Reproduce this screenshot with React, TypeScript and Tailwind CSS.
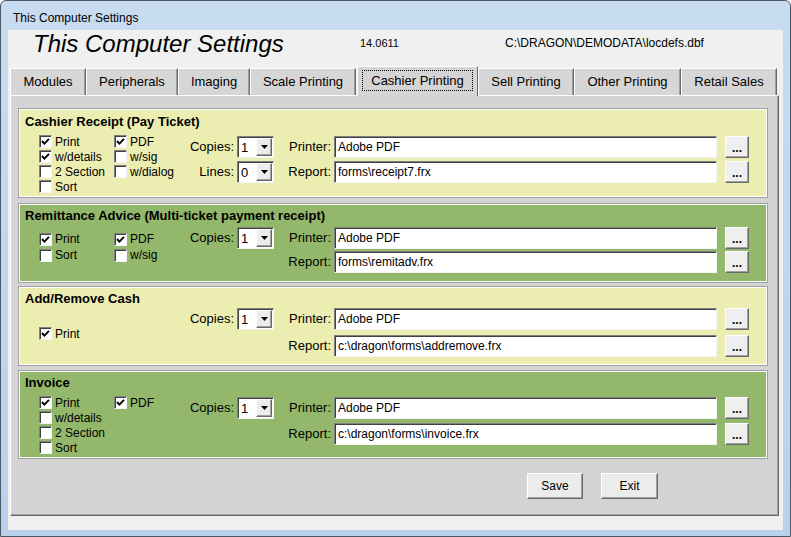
import React from 'react';

type Check = { label: string; checked: boolean } | null;

type RowDef = {
  label?: string;
  combo?: string;
  plabel: string;
  value: string;
};

type PanelDef = {
  title: string;
  green: boolean;
  cls: string; // height + top margin
  titleCls: string;
  bodyCls: string;
  checkCls: string;
  rowsCls: string;
  checks: Check[];
  rows: RowDef[];
};

const panels: PanelDef[] = [
  {
    title: 'Cashier Receipt (Pay Ticket)',
    green: false,
    cls: 'h-[90px]',
    titleCls: 'pt-[5px]',
    bodyCls: 'mt-[4px]',
    checkCls: 'mt-0 auto-rows-[15px]',
    rowsCls: 'mt-[2px] gap-[3px]',
    checks: [
      { label: 'Print', checked: true },
      { label: 'PDF', checked: true },
      { label: 'w/details', checked: true },
      { label: 'w/sig', checked: false },
      { label: '2 Section', checked: false },
      { label: 'w/dialog', checked: false },
      { label: 'Sort', checked: false },
      null,
    ],
    rows: [
      { label: 'Copies:', combo: '1', plabel: 'Printer:', value: 'Adobe PDF' },
      { label: 'Lines:', combo: '0', plabel: 'Report:', value: 'forms\\receipt7.frx' },
    ],
  },
  {
    title: 'Remittance Advice (Multi-ticket payment receipt)',
    green: true,
    cls: 'h-[80px] mt-[5px]',
    titleCls: 'pt-[4px]',
    bodyCls: 'mt-[3px]',
    checkCls: 'mt-[4px] auto-rows-[16px]',
    rowsCls: 'mt-0 gap-[2px]',
    checks: [
      { label: 'Print', checked: true },
      { label: 'PDF', checked: true },
      { label: 'Sort', checked: false },
      { label: 'w/sig', checked: false },
    ],
    rows: [
      { label: 'Copies:', combo: '1', plabel: 'Printer:', value: 'Adobe PDF' },
      { plabel: 'Report:', value: 'forms\\remitadv.frx' },
    ],
  },
  {
    title: 'Add/Remove Cash',
    green: false,
    cls: 'h-[80px] mt-[3px]',
    titleCls: 'pt-[4px]',
    bodyCls: 'mt-[1px]',
    checkCls: 'mt-[18px] auto-rows-[15px]',
    rowsCls: 'mt-0 gap-[5px]',
    checks: [{ label: 'Print', checked: true }],
    rows: [
      { label: 'Copies:', combo: '1', plabel: 'Printer:', value: 'Adobe PDF' },
      { plabel: 'Report:', value: 'c:\\dragon\\forms\\addremove.frx' },
    ],
  },
  {
    title: 'Invoice',
    green: true,
    cls: 'h-[89px] mt-[4px]',
    titleCls: 'pt-[4px]',
    bodyCls: 'mt-[4px]',
    checkCls: 'mt-0 auto-rows-[15px]',
    rowsCls: 'mt-[2px] gap-[4px]',
    checks: [
      { label: 'Print', checked: true },
      { label: 'PDF', checked: true },
      { label: 'w/details', checked: false },
      null,
      { label: '2 Section', checked: false },
      null,
      { label: 'Sort', checked: false },
      null,
    ],
    rows: [
      { label: 'Copies:', combo: '1', plabel: 'Printer:', value: 'Adobe PDF' },
      { plabel: 'Report:', value: 'c:\\dragon\\forms\\invoice.frx' },
    ],
  },
];

const tabs = [
  { label: 'Modules', cls: 'w-[76px]' },
  { label: 'Peripherals', cls: 'w-[92px]' },
  { label: 'Imaging', cls: 'w-[72px]' },
  { label: 'Scale Printing', cls: 'w-[106px]' },
  { label: 'Cashier Printing', cls: 'w-[121px]', active: true },
  { label: 'Sell Printing', cls: 'w-[96px]' },
  { label: 'Other Printing', cls: 'w-[107px]' },
  { label: 'Retail Sales', cls: 'w-[96px]' },
];

const sunken =
  'border border-t-[#808080] border-l-[#808080] border-r-[#f4f4f4] border-b-[#f4f4f4] shadow-[inset_1px_1px_0_#404040]';
const raised =
  'border border-t-white border-l-white border-r-[#696969] border-b-[#696969] shadow-[inset_-1px_-1px_0_#a0a0a0]';

const CheckBox = ({ item }: { item: Check }) => {
  if (!item) return <div />;
  return (
    <div className="flex items-center gap-[3px]">
      <div className={`w-[13px] h-[13px] bg-white flex items-center justify-center ${sunken}`}>
        {item.checked && (
          <svg width="9" height="9" viewBox="0 0 9 9">
            <path d="M1 4 L3.4 6.6 L8 1.8" fill="none" stroke="#000" strokeWidth="1.9" />
          </svg>
        )}
      </div>
      <span className="text-[12px] leading-[14px]">{item.label}</span>
    </div>
  );
};

const Combo = ({ value }: { value: string }) => (
  <div className={`w-[37px] h-[22px] flex bg-white ${sunken}`}>
    <span className="flex-1 pl-[3px] pt-[1px] text-[13px] leading-[19px]">{value}</span>
    <div className={`w-[16px] my-[1px] mr-[1px] bg-[#ececec] flex items-center justify-center ${raised}`}>
      <svg width="7" height="4" viewBox="0 0 7 4">
        <path d="M0 0 H7 L3.5 4 Z" fill="#000" />
      </svg>
    </div>
  </div>
);

const Row = ({ row }: { row: RowDef }) => (
  <div className="flex items-center h-[22px]">
    <div className="w-[45px] text-right text-[13px] leading-[16px]">{row.label}</div>
    <div className="w-[37px] ml-[3px]">{row.combo !== undefined && <Combo value={row.combo} />}</div>
    <div className="w-[43px] ml-[14px] text-right text-[13px] leading-[16px]">{row.plabel}</div>
    <div className={`ml-[3px] w-[383px] h-[22px] bg-white pl-[3px] text-[12px] leading-[19px] pt-[1px] ${sunken}`}>
      {row.value}
    </div>
    <div
      className={`ml-[8px] w-[24px] h-[22px] bg-[#efefef] flex items-center justify-center text-[12px] font-bold leading-[18px] pt-[1px] ${raised}`}
    >
      ...
    </div>
  </div>
);

const Panel = ({ p }: { p: PanelDef }) => (
  <div
    className={`w-[750px] border border-[#a0a0a0] shadow-[inset_0_0_0_1px_#ffffff] ${
      p.green ? 'bg-[#93b86b]' : 'bg-[#ebedb1]'
    } ${p.cls}`}
  >
    <div className={`pl-[6px] text-[13px] font-bold leading-[16px] ${p.titleCls}`}>{p.title}</div>
    <div className={`flex items-start ${p.bodyCls}`}>
      <div className={`ml-[20px] w-[150px] grid grid-cols-[75px_75px] ${p.checkCls}`}>
        {p.checks.map((c, i) => (
          <CheckBox key={i} item={c} />
        ))}
      </div>
      <div className={`flex flex-col ${p.rowsCls}`}>
        {p.rows.map((r, i) => (
          <Row key={i} row={r} />
        ))}
      </div>
    </div>
  </div>
);

const App: React.FC = () => {
  return (
    <div className="w-[791px] h-[537px] font-['Liberation_Sans',Arial,sans-serif] text-black">
      <div className="w-full h-full rounded-t-[6px] border border-[#4a5868] bg-gradient-to-b from-[#c8dcf1] to-[#b9d1ea] flex flex-col">
        {/* Title bar */}
        <div className="h-[29px] flex items-center pl-[12px] pt-[4px] text-[12px]">This Computer Settings</div>

        {/* Client area */}
        <div className="mx-[7px] h-[500px] bg-[#f0f0f0] flex flex-col">
          {/* Header */}
          <div className="h-[36px] flex items-start">
            <div className="ml-[25px] w-[327px] text-[24px] italic leading-[28px]">This Computer Settings</div>
            <div className="w-[145px] mt-[6px] text-[11px] leading-[14px]">14.0611</div>
            <div className="mt-[6px] text-[12px] leading-[14px]">C:\DRAGON\DEMODATA\locdefs.dbf</div>
          </div>

          {/* Tabs */}
          <div className="h-[29px] pl-[2px] flex items-end">
            {tabs.map(t =>
              t.active ? (
                <div
                  key={t.label}
                  className={`relative z-10 ml-[1px] h-[30px] mb-[-1px] bg-[#d4d4d4] border-l border-t border-r border-l-white border-t-white border-r-[#696969] px-[4px] pt-[3px] ${t.cls}`}
                >
                  <div className="h-[21px] border border-dotted border-black flex items-center justify-center text-[13px]">
                    {t.label}
                  </div>
                </div>
              ) : (
                <div
                  key={t.label}
                  className={`h-[27px] bg-[#d6d6d6] border-l border-t border-r border-l-white border-t-white border-r-[#696969] shadow-[inset_-1px_0_0_#a0a0a0] flex items-center justify-center text-[13px] ${t.cls}`}
                >
                  {t.label}
                </div>
              )
            )}
          </div>

          {/* Tab page */}
          <div className="ml-[2px] w-[769px] h-[421px] bg-[#d4d4d4] border border-l-white border-t-white border-r-[#696969] border-b-[#696969] shadow-[inset_-1px_-1px_0_#a0a0a0] pt-[12px] pl-[7px] flex flex-col">
            {panels.map(p => (
              <Panel key={p.title} p={p} />
            ))}
            <div className="mt-[14px] flex">
              <div className={`ml-[509px] w-[56px] h-[26px] bg-[#ececec] flex items-center justify-center text-[12px] ${raised}`}>
                Save
              </div>
              <div className={`ml-[18px] w-[57px] h-[26px] bg-[#ececec] flex items-center justify-center text-[12px] ${raised}`}>
                Exit
              </div>
            </div>
          </div>
        </div>
      </div>
    </div>
  );
};

export default App;
